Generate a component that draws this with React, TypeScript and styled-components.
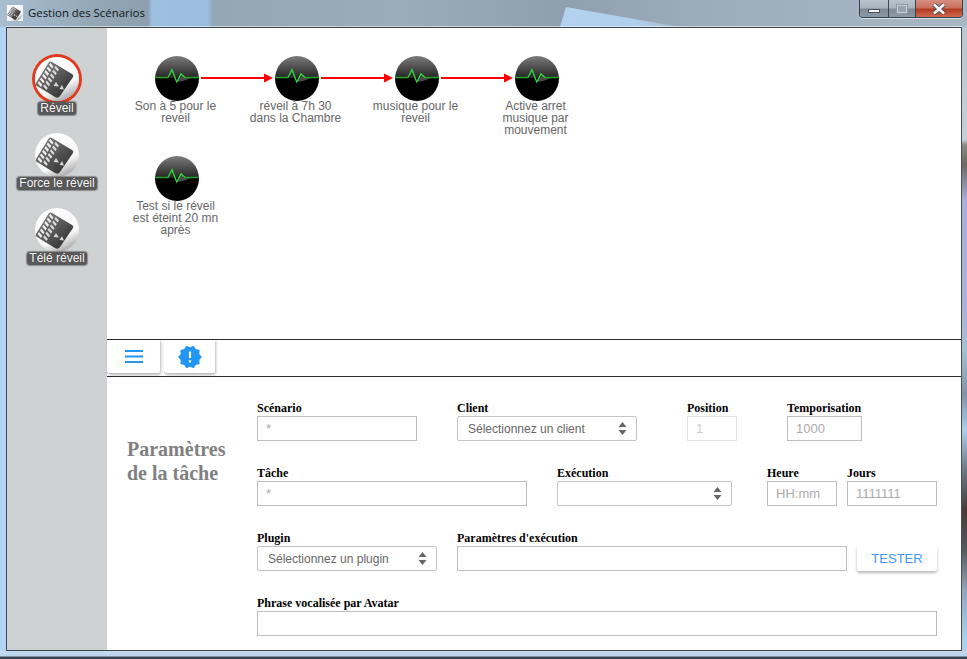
import React from "react";
import styled, { createGlobalStyle } from "styled-components";

const Global = createGlobalStyle`
  html, body { margin: 0; padding: 0; overflow: hidden; }
  * { box-sizing: border-box; }
`;

const Desktop = styled.div`
  position: relative;
  width: 967px;
  height: 659px;
  overflow: hidden;
  display: flex;
  flex-direction: column;
  padding: 0 5px 8px 6px;
  background:
    linear-gradient(180deg, rgba(0,0,0,0) 0, rgba(0,0,0,0) 650px, #c3d9ee 651px, #bcd5ec 656px, #3d4650 657px, #3d4650 659px),
    linear-gradient(90deg, #b3d4f2 0, #b3d4f2 6px, rgba(0,0,0,0) 6px, rgba(0,0,0,0) 962px),
    linear-gradient(180deg, #b9c6d0 0, #c2d0da 140px, #8a8a80 145px, #6c6a62 165px, #a9aedc 200px, #aab2dc 300px, #a5c0d2 350px, #7f94a8 395px, #b0cdea 430px, #6a7a88 470px, #4a3a38 510px, #55585e 550px, #8fa6ba 590px, #aed0f0 640px);
`;

const Glass = styled.div`
  position: absolute;
  left: 0;
  top: 0;
  width: 100%;
  height: 27px;
  background: linear-gradient(90deg, #a8bfd2 0, #94a8b8 90px, #8d9fae 148px, #9cc0e2 152px, #9abde0 208px, #95a6b4 213px, #9aacba 400px, #8f9fae 560px, #9dacba 700px, #a0b0be 800px, #a8b7c4 967px);
`;

const Shard = styled.span`
  position: absolute;
  left: 560px;
  top: 7px;
  width: 125px;
  height: 20px;
  background: linear-gradient(90deg, #b2d2f0 0, #b0cfec 60%, #a2b6c8 100%);
  clip-path: polygon(6px 0, 120px 20px, 0 20px);
  filter: blur(.6px);
`;

const TitleBar = styled.div`
  position: relative;
  height: 27px;
  display: flex;
  align-items: flex-start;
  flex: none;
`;

const AppIcon = styled.span`
  display: flex;
  width: 16px;
  height: 16px;
  margin: 5px 0 0 1px;
  background: #f4f4f4;
`;

const Title = styled.span`
  margin: 6px 0 0 5px;
  font: 11.4px/14px "Open Sans", "Noto Sans", sans-serif;
  color: #101418;
`;

const Controls = styled.div`
  margin-left: auto;
  margin-right: -1px;
  height: 18px;
  display: flex;
  border: 1px solid #39434e;
  border-top: none;
  border-radius: 0 0 4px 4px;
  box-shadow: 0 1px 0 rgba(255,255,255,.55);
  overflow: hidden;
`;

const WinButton = styled.div<{ $w: number; $close?: boolean }>`
  width: ${(p) => p.$w}px;
  display: flex;
  align-items: center;
  justify-content: center;
  background: ${(p) =>
    p.$close
      ? "linear-gradient(180deg,#d68e80 0,#c9705f 45%,#b53a24 55%,#cf6a50 100%)"
      : "linear-gradient(180deg,#b8c4cc 0,#aab6be 45%,#7f8c98 55%,#8c98a4 100%)"};
  & + & { border-left: 1px solid #3c4650; }
`;

const MinGlyph = styled.span`
  width: 12px;
  height: 4px;
  background: #f4f6f8;
  border: 1px solid #49525c;
  margin-top: 5px;
`;

const MaxGlyph = styled.span`
  width: 12px;
  height: 10px;
  border: 2px solid #c5ced6;
  outline: 1px solid #8d98a3;
  outline-offset: -1px;
  background: #97a3ae;
`;

const Client = styled.div`
  position: relative;
  flex: 1;
  min-height: 0;
  display: flex;
  background: #fff;
  border: 1px solid #3c4650;
  border-right-color: #46505a;
  box-shadow: 0 -1px 0 rgba(255,255,255,.55);
`;

const Sidebar = styled.aside`
  width: 100px;
  flex: none;
  background: #ced2d3;
  padding-top: 29px;
  display: flex;
  flex-direction: column;
  align-items: center;
`;

const ScenarioItem = styled.div<{ $mb: number }>`
  display: flex;
  flex-direction: column;
  align-items: center;
  margin-bottom: ${(p) => p.$mb}px;
`;

const ClapDisc = styled.span<{ $active?: boolean }>`
  width: 44px;
  height: 44px;
  display: block;
  border-radius: 50%;
  box-shadow: ${(p) => (p.$active ? "0 0 0 3px #e2391d" : "none")};
`;

const ScenarioLabel = styled.span<{ $active?: boolean }>`
  margin-top: ${(p) => (p.$active ? 1 : 0)}px;
  font: 12px/13px "Liberation Sans", Arial, sans-serif;
  color: #fff;
  background: #5a5a5a;
  border-radius: 3px;
  padding: 0 2px;
  white-space: nowrap;
  text-shadow: 0 0 1px #222;
  box-shadow: 0 0 1px 1px rgba(80,80,80,.55);
`;

const Main = styled.main`
  flex: 1;
  min-width: 0;
  display: flex;
  flex-direction: column;
`;

const Canvas = styled.section`
  position: relative;
  height: 311px;
  flex: none;
`;

const Links = styled.svg`
  position: absolute;
  left: 0;
  top: 0;
`;

const Node = styled.div<{ $x: number; $y: number }>`
  position: absolute;
  left: ${(p) => p.$x}px;
  top: ${(p) => p.$y}px;
  width: 100px;
  display: flex;
  flex-direction: column;
  align-items: center;
`;

const NodeLabel = styled.div`
  width: 92px;
  margin: -1px 3px 0 0;
  font: 12px/12px "Liberation Sans", Arial, sans-serif;
  color: #666;
  text-align: center;
`;

const TabBar = styled.nav`
  height: 38px;
  flex: none;
  border-top: 1px solid #2e2e2e;
  border-bottom: 1px solid #2e2e2e;
  display: flex;
  gap: 4px;
`;

const Tab = styled.div<{ $w: number }>`
  width: ${(p) => p.$w}px;
  height: 34px;
  display: flex;
  align-items: center;
  justify-content: center;
  background: #fff;
  border-bottom: 1px dotted #888;
  border-radius: 0 0 3px 3px;
  box-shadow: 1px 1px 3px rgba(0,0,0,.28);
`;

const FormArea = styled.section`
  flex: 1;
  min-height: 0;
  display: flex;
`;

const Heading = styled.h2`
  width: 150px;
  flex: none;
  margin: 0;
  padding: 60px 0 0 20px;
  font: bold 20px/24px "Liberation Serif", "Times New Roman", serif;
  color: #808080;
`;

const Rows = styled.div`
  padding-top: 24px;
  display: flex;
  flex-direction: column;
  gap: 25px;
`;

const Row = styled.div`
  display: flex;
  align-items: flex-end;
`;

const Field = styled.label<{ $w: number; $mr?: number }>`
  width: ${(p) => p.$w}px;
  margin-right: ${(p) => p.$mr ?? 0}px;
  display: flex;
  flex-direction: column;
  position: relative;
`;

const Caption = styled.span`
  font: bold 12px/15px "Liberation Serif", "Times New Roman", serif;
  color: #000;
`;

const TextInput = styled.input`
  width: 100%;
  height: 25px;
  border: 1px solid #bdbdbd;
  background: #fff;
  padding: 0 8px;
  font: 13px "Liberation Sans", Arial, sans-serif;
  color: #aaa;
  outline: none;
  &::placeholder { color: #aaa; opacity: 1; }
  &:disabled { border-color: #e2e2e2; color: #ccc; }
`;

const SelectBox = styled.select`
  width: 100%;
  height: 25px;
  appearance: none;
  border: 1px solid #c4c4c4;
  border-radius: 2px;
  background: #fff;
  padding: 0 10px;
  font: 12px "Liberation Sans", Arial, sans-serif;
  color: #666;
  outline: none;
`;

const Updown = styled.span`
  position: absolute;
  right: 10px;
  bottom: 5px;
  pointer-events: none;
`;

const TestButton = styled.button`
  width: 80px;
  height: 25px;
  margin-left: 10px;
  border: none;
  border-radius: 2px;
  background: #fff;
  color: #3f97f6;
  font: 13px "Liberation Sans", Arial, sans-serif;
  padding: 0;
  box-shadow: 0 2px 3px rgba(0,0,0,.28);
`;

const stripes = (u0: number, u1: number, t0: number, n: number, step: number, w: number) => {
  const A = [15, 5];
  const DA = [-14, 23];
  const BA = [23, 13];
  const pt = (t: number, u: number) =>
    `${(A[0] + t * DA[0] + u * BA[0]).toFixed(1)} ${(A[1] + t * DA[1] + u * BA[1]).toFixed(1)}`;
  let d = "";
  for (let i = 0; i < n; i++) {
    const t = t0 + i * step;
    d += `M${pt(t, u0)} L${pt(t + w, u0)} L${pt(t + w + 0.06, u1)} L${pt(t + 0.06, u1)} Z `;
  }
  return d;
};

const ClapIcon = ({ size, id }: { size: number; id: string }) => (
  <svg width={size} height={size} viewBox="0 0 44 44" style={{ display: "block" }}>
    <defs>
      <linearGradient id={`${id}d`} x1="0.25" y1="0" x2="0.75" y2="1">
        <stop offset="0" stopColor="#fff" />
        <stop offset=".68" stopColor="#f6f6f6" />
        <stop offset="1" stopColor="#9d9d9d" />
      </linearGradient>
      <linearGradient id={`${id}b`} x1="0" y1="0" x2="1" y2="1">
        <stop offset="0" stopColor="#8a8a8a" />
        <stop offset="1" stopColor="#252525" />
      </linearGradient>
    </defs>
    <circle cx="22" cy="22" r="22" fill={`url(#${id}d)`} />
    <path d="M14 5 Q15 4 17 5 L37 17 Q39 18 38 20 L25 39 Q23 42 20 40 L2 29 Q0 28 1 26 Z" fill={`url(#${id}b)`} />
    <path d={stripes(0.02, 0.2, 0.02, 6, 0.16, 0.09)} fill="#eee" />
    <path d={stripes(0.26, 0.44, 0.02, 6, 0.16, 0.09)} fill="#dadada" />
    <path d="M21 25 L24 29.5 L18.5 29 Z M27 28 L29 32.5 L24.5 32 Z" fill="#d6d6d6" />
  </svg>
);

const PulseIcon = ({ id }: { id: string }) => (
  <svg width="44" height="45" viewBox="0 0 44 45" style={{ display: "block" }}>
    <defs>
      <linearGradient id={id} x1="0" y1="0" x2="0" y2="1">
        <stop offset="0" stopColor="#7c7c7c" />
        <stop offset=".48" stopColor="#262626" />
        <stop offset=".5" stopColor="#000" />
        <stop offset="1" stopColor="#000" />
      </linearGradient>
    </defs>
    <ellipse cx="22" cy="22.5" rx="22" ry="22.5" fill={`url(#${id})`} />
    <path d="M21.7 26 L26 17.7 L30 21.5 L36 22 L28 25 Z" fill="#4a4a4a" />
    <path d="M0.3 21.5 H13 M30 21.5 H43.7" fill="none" stroke="#1ca522" strokeWidth="1.5" />
    <path d="M13 21.5 L17 13.7 L21.7 26 L26 17.7 L30 21.5" fill="none" stroke="#2fd838" strokeWidth="1.3" />
  </svg>
);

const Arrows = () => (
  <svg width="9" height="15" viewBox="0 0 9 15" style={{ display: "block" }}>
    <path d="M4.5 1 L8.5 6 H.5 Z M4.5 14 L.5 9 H8.5 Z" fill="#666" />
  </svg>
);

const scenarios = [
  { label: "Réveil", active: true, mb: 18 },
  { label: "Force le réveil", active: false, mb: 18 },
  { label: "Télé réveil", active: false, mb: 0 },
];

const nodes = [
  { x: 20, y: 28, label: "Son à 5 pour le reveil" },
  { x: 140, y: 28, label: "réveil à 7h 30 dans la Chambre" },
  { x: 260, y: 28, label: "musique pour le reveil" },
  { x: 380, y: 28, label: "Active arret musique par mouvement" },
  { x: 20, y: 128, label: "Test si le réveil est éteint 20 mn après" },
];

const SelectField = ({ w, mr, text, caption }: { w: number; mr: number; text: string; caption: string }) => (
  <Field $w={w} $mr={mr}>
    <Caption>{caption}</Caption>
    <SelectBox defaultValue={text}>
      <option value={text}>{text}</option>
    </SelectBox>
    <Updown>
      <Arrows />
    </Updown>
  </Field>
);

export default function App() {
  return (
    <Desktop>
      <Global />
      <Glass />
      <Shard />
      <TitleBar>
        <AppIcon>
          <ClapIcon size={16} id="app" />
        </AppIcon>
        <Title>Gestion des Scénarios</Title>
        <Controls>
          <WinButton $w={28}>
            <MinGlyph />
          </WinButton>
          <WinButton $w={27}>
            <MaxGlyph />
          </WinButton>
          <WinButton $w={47} $close>
            <svg width="16" height="12" viewBox="0 0 16 12">
              <path d="M3 1.5 L13 10.5 M13 1.5 L3 10.5" stroke="#49525c" strokeWidth="4.4" />
              <path d="M3 1.5 L13 10.5 M13 1.5 L3 10.5" stroke="#f4f6f8" strokeWidth="2.6" />
            </svg>
          </WinButton>
        </Controls>
      </TitleBar>
      <Client>
        <Sidebar>
          {scenarios.map((s, i) => (
            <ScenarioItem key={s.label} $mb={s.mb}>
              <ClapDisc $active={s.active}>
                <ClapIcon size={44} id={`c${i}`} />
              </ClapDisc>
              <ScenarioLabel $active={s.active}>{s.label}</ScenarioLabel>
            </ScenarioItem>
          ))}
        </Sidebar>
        <Main>
          <Canvas>
            <Links width="500" height="100">
              {[94, 214, 334].map((x) => (
                <g key={x}>
                  <rect x={x} y="49" width="65" height="2" fill="#f00" />
                  <path d={`M${x + 63} 45.5 L${x + 72} 50 L${x + 63} 54.5 Z`} fill="#f00" />
                </g>
              ))}
            </Links>
            {nodes.map((n, i) => (
              <Node key={n.label} $x={n.x} $y={n.y}>
                <PulseIcon id={`p${i}`} />
                <NodeLabel>{n.label}</NodeLabel>
              </Node>
            ))}
          </Canvas>
          <TabBar>
            <Tab $w={53}>
              <svg width="18" height="13" viewBox="0 0 18 13">
                <path d="M0 1h18M0 6.5h18M0 12h18" stroke="#2196f3" strokeWidth="2" />
              </svg>
            </Tab>
            <Tab $w={51}>
              <svg width="26" height="26" viewBox="0 0 24 24">
                <path
                  d="M23 12l-2.44-2.78.34-3.68-3.61-.82-1.89-3.18L12 3 8.6 1.54 6.71 4.72l-3.61.81.34 3.68L1 12l2.44 2.78-.34 3.69 3.61.82 1.89 3.18L12 21l3.4 1.46 1.89-3.18 3.61-.82-.34-3.68L23 12zm-10 5h-2v-2h2v2zm0-4h-2V7h2v6z"
                  fill="#2196f3"
                />
              </svg>
            </Tab>
          </TabBar>
          <FormArea>
            <Heading>
              Paramètres
              <br />
              de la tâche
            </Heading>
            <Rows>
              <Row>
                <Field $w={160} $mr={40}>
                  <Caption>Scénario</Caption>
                  <TextInput placeholder="*" />
                </Field>
                <SelectField w={180} mr={50} caption="Client" text="Sélectionnez un client" />
                <Field $w={50} $mr={50}>
                  <Caption>Position</Caption>
                  <TextInput disabled value="1" readOnly />
                </Field>
                <Field $w={75}>
                  <Caption>Temporisation</Caption>
                  <TextInput placeholder="1000" />
                </Field>
              </Row>
              <Row>
                <Field $w={270} $mr={30}>
                  <Caption>Tâche</Caption>
                  <TextInput placeholder="*" />
                </Field>
                <SelectField w={175} mr={35} caption="Exécution" text="" />
                <Field $w={70} $mr={10}>
                  <Caption>Heure</Caption>
                  <TextInput placeholder="HH:mm" />
                </Field>
                <Field $w={90}>
                  <Caption>Jours</Caption>
                  <TextInput placeholder="1111111" />
                </Field>
              </Row>
              <Row>
                <SelectField w={180} mr={20} caption="Plugin" text="Sélectionnez un plugin" />
                <Field $w={390}>
                  <Caption>Paramètres d'exécution</Caption>
                  <TextInput />
                </Field>
                <TestButton>TESTER</TestButton>
              </Row>
              <Row>
                <Field $w={680}>
                  <Caption>Phrase vocalisée par Avatar</Caption>
                  <TextInput />
                </Field>
              </Row>
            </Rows>
          </FormArea>
        </Main>
      </Client>
    </Desktop>
  );
}
